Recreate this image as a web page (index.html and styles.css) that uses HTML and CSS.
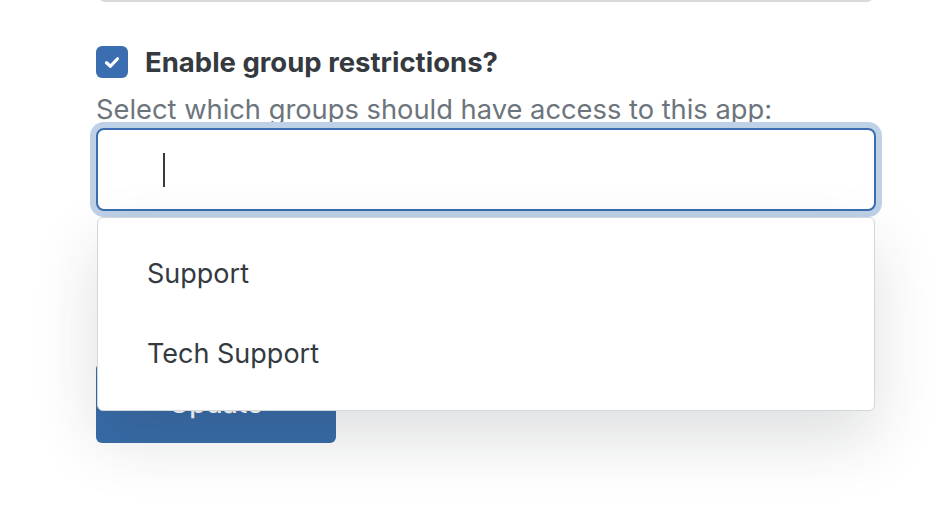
FILE: index.html
```html
<!DOCTYPE html>
<html lang="en">
<head>
  <meta charset="UTF-8">
  <meta name="viewport" content="width=device-width, initial-scale=1.0">
  <title>App group restrictions</title>
  <link rel="stylesheet" href="styles.css">
</head>
<body>

  <div class="form">
    <!-- bottom edge of the field above, scrolled out of view -->
    <div class="prev-field"></div>

    <label class="check-row">
      <span class="checkbox">
        <svg width="20" height="20" viewBox="0 0 16 16">
          <polyline points="3.6,8.6 6.7,11.4 12.4,5.4" fill="none" stroke="#fff" stroke-width="2.6" stroke-linecap="round" stroke-linejoin="round"/>
        </svg>
      </span>
      <span class="check-label">Enable group restrictions?</span>
    </label>

    <p class="help">Select which groups should have access to this app:</p>

    <div class="select">
      <div class="select-input">
        <span class="caret"></span>
      </div>

      <ul class="dropdown">
        <li class="option">Support</li>
        <li class="option">Tech Support</li>
      </ul>
    </div>

    <button class="btn">Update</button>
  </div>

</body>
</html>
```

FILE: styles.css
```css
* {
  margin: 0;
  padding: 0;
  box-sizing: border-box;
}

html, body {
  height: 100%;
}

body {
  font-family: 'Inter', 'Noto Sans', sans-serif;
  background: #fff;
  color: #343a40;
}

.form {
  width: 780px;
  margin-left: 96px;
}

.prev-field {
  height: 12px;
  margin: -10px 3px 0 3px;
  border: 2px solid #d6dadd;
  border-radius: 8px;
}

.check-row {
  display: flex;
  align-items: center;
  gap: 17px;
  margin-top: 44px;
}

.checkbox {
  width: 32px;
  height: 32px;
  border-radius: 6px;
  background: #3a6eb0;
  display: flex;
  justify-content: center;
  align-items: center;
}

.check-label {
  font-size: 27.5px;
  font-weight: 700;
  line-height: 32px;
}

.help {
  font-size: 27.3px;
  line-height: 36px;
  color: #6c757d;
  margin-top: 14px;
}

.select {
  position: relative;
}

.select-input {
  height: 83px;
  border: 2px solid #3a6eb0;
  border-radius: 8px;
  box-shadow: 0 0 0 6px #bed1e6;
  background: #fff;
  display: flex;
  align-items: center;
  padding-left: 65px;
}

.caret {
  width: 2px;
  height: 34px;
  background: #343a40;
}

.dropdown {
  position: absolute;
  top: calc(100% + 6px);
  left: 1px;
  right: 1px;
  z-index: 2;
  list-style: none;
  background: #fff;
  border: 1px solid #d3d7db;
  border-radius: 6px;
  padding: 16px 0;
  box-shadow: 0 28px 64px rgba(33, 40, 48, 0.15);
}

.option {
  height: 80px;
  line-height: 80px;
  padding-left: 49px;
  font-size: 27px;
}

.btn {
  display: block;
  width: 240px;
  height: 80px;
  margin-top: 152px;
  border: none;
  border-radius: 6px;
  background: #386ca8;
  color: #fff;
  font-family: inherit;
  font-size: 27px;
  font-weight: 500;
}
```
